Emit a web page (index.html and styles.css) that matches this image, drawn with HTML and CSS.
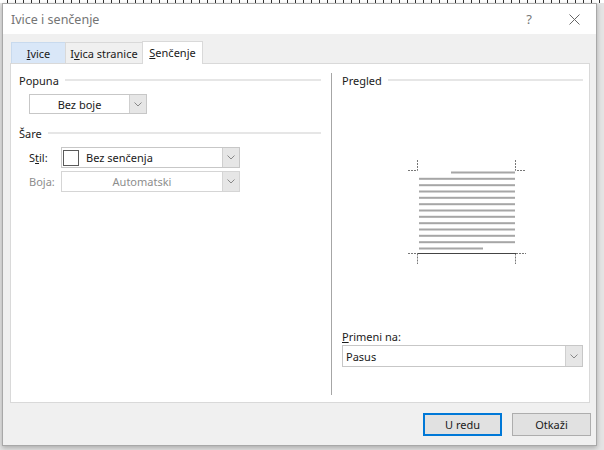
FILE: index.html
```html
<!DOCTYPE html>
<html lang="sr">
<head>
<meta charset="utf-8">
<title>Ivice i senčenje</title>
<link rel="stylesheet" href="styles.css">
</head>
<body>
<div class="ruler"></div>
<div class="dialog">
  <div class="titlebar">
    <span class="title">Ivice i senčenje</span>
    <span class="help">?</span>
    <span class="close">
      <svg width="11" height="11" viewBox="0 0 11 11"><path d="M0.5 0.5 L10.5 10.5 M10.5 0.5 L0.5 10.5" stroke="#666" stroke-width="1" fill="none"/></svg>
    </span>
  </div>
  <div class="body">
    <div class="tabs">
      <div class="tab tab-hover" style="width:55px"><u>I</u>vice</div>
      <div class="tab" style="width:78px">I<u>v</u>ica stranice</div>
      <div class="tab tab-active" style="width:61px"><u>S</u>enčenje</div>
    </div>
    <div class="panel">
      <div class="col-left">
        <div class="group-head"><span>Popuna</span><i class="rule"></i></div>
        <div class="combo combo-fill">
          <span class="combo-text center">Bez boje</span>
          <span class="arrow"><svg width="8" height="5" viewBox="0 0 8 5"><path d="M0.5 0.5 L4 4 L7.5 0.5" stroke="#888" fill="none"/></svg></span>
        </div>
        <div class="group-head head-sare"><span>Šare</span><i class="rule"></i></div>
        <div class="row">
          <span class="lbl">S<u>t</u>il:</span>
          <div class="combo combo-wide">
            <span class="swatch"></span>
            <span class="combo-text">Bez senčenja</span>
            <span class="arrow"><svg width="8" height="5" viewBox="0 0 8 5"><path d="M0.5 0.5 L4 4 L7.5 0.5" stroke="#888" fill="none"/></svg></span>
          </div>
        </div>
        <div class="row row-2">
          <span class="lbl disabled">Boja:</span>
          <div class="combo combo-wide combo-disabled">
            <span class="combo-text center disabled">Automatski</span>
            <span class="arrow"><svg width="8" height="5" viewBox="0 0 8 5"><path d="M0.5 0.5 L4 4 L7.5 0.5" stroke="#888" fill="none"/></svg></span>
          </div>
        </div>
      </div>
      <div class="divider"></div>
      <div class="col-right">
        <div class="group-head"><span>Pregled</span><i class="rule"></i></div>
        <svg class="preview" width="240" height="104" viewBox="0 0 240 104">
          <g stroke="#777" stroke-width="1" stroke-dasharray="2 1" fill="none">
            <path d="M75.5 0 V10.5 H66"/>
            <path d="M173.5 0 V10.5 H184"/>
            <path d="M66 93.5 H76 M75.5 93.5 V104"/>
            <path d="M174 93.5 H184 M173.5 93.5 V104"/>
          </g>
          <g fill="#a6a6a6">
            <rect x="109" y="11.5" width="64" height="2"/>
            <rect x="77" y="17.8" width="96" height="2"/>
            <rect x="77" y="24.2" width="96" height="2"/>
            <rect x="77" y="30.5" width="96" height="2"/>
            <rect x="77" y="36.8" width="96" height="2"/>
            <rect x="77" y="43.2" width="96" height="2"/>
            <rect x="77" y="49.5" width="96" height="2"/>
            <rect x="77" y="55.8" width="96" height="2"/>
            <rect x="77" y="62.2" width="96" height="2"/>
            <rect x="77" y="68.5" width="96" height="2"/>
            <rect x="77" y="74.8" width="96" height="2"/>
            <rect x="77" y="81.2" width="96" height="2"/>
            <rect x="77" y="87.5" width="64" height="2"/>
          </g>
          <path d="M76 93.5 H174" stroke="#444" stroke-width="1"/>
        </svg>
        <div class="spacer"></div>
        <div class="lbl-apply"><u>P</u>rimeni na:</div>
        <div class="combo combo-apply">
          <span class="combo-text">Pasus</span>
          <span class="arrow"><svg width="8" height="5" viewBox="0 0 8 5"><path d="M0.5 0.5 L4 4 L7.5 0.5" stroke="#888" fill="none"/></svg></span>
        </div>
      </div>
    </div>
    <div class="buttons">
      <button class="btn btn-default">U redu</button>
      <button class="btn">Otkaži</button>
    </div>
  </div>
</div>
</body>
</html>
```

FILE: styles.css
```css
* { box-sizing: border-box; }
html, body { margin: 0; padding: 0; }
body {
  width: 604px;
  height: 450px;
  overflow: hidden;
  background: #e4e4e4;
  font-family: "Segoe UI", "Noto Sans", "Open Sans", sans-serif;
  font-size: 11px;
  color: #1a1a1a;
}
.ruler {
  height: 3px;
  background-color: #fff;
  background-image: repeating-linear-gradient(to right, transparent 0, transparent 7px, #333 7px, #333 8px);
}
.dialog {
  margin-left: 2px;
  width: 595px;
  height: 443px;
  border: 1px solid #a8a8a8;
  background: #f0f0f0;
  box-shadow: 0 2px 5px rgba(0,0,0,0.25);
  display: flex;
  flex-direction: column;
}
.titlebar {
  height: 30px;
  background: #fff;
  display: flex;
  align-items: center;
  padding-left: 8px;
}
.title {
  flex: 1;
  font-size: 12.5px;
  color: #747474;
}
.help {
  width: 20px;
  text-align: center;
  font-size: 13px;
  color: #777;
  margin-right: 30px;
}
.close {
  width: 11px;
  display: flex;
  margin-right: 16px;
}
.body {
  flex: 1;
  padding: 7px 6px 0 7px;
  display: flex;
  flex-direction: column;
}
.tabs {
  display: flex;
  align-items: flex-end;
  height: 22px;
  padding-left: 1px;
  position: relative;
  z-index: 1;
}
.tab {
  height: 21px;
  border: 1px solid #d9d9d9;
  border-bottom: none;
  margin-right: -1px;
  display: flex;
  align-items: center;
  justify-content: center;
  background: #f0f0f0;
  color: #1a1a1a;
  white-space: nowrap;
}
.tab-hover {
  background: #d9e7f8;
  border-color: #c8daee;
}
.tab-active {
  height: 23px;
  background: #fff;
  margin-bottom: -1px;
  padding-bottom: 1px;
}
.panel {
  height: 340px;
  border: 1px solid #d9d9d9;
  background: #fff;
  display: flex;
}
.col-left {
  width: 320px;
  padding: 8px 10px 0 8px;
}
.group-head {
  height: 16px;
  display: flex;
  align-items: center;
  gap: 6px;
}
.rule {
  flex: 1;
  height: 2px;
  background: #e6e6e6;
}
.head-sare { margin-top: 11px; }
.combo {
  display: flex;
  align-items: stretch;
  border: 1px solid #c7c7c7;
  background: #fff;
}
.combo-text {
  flex: 1;
  display: flex;
  align-items: center;
  padding-left: 3px;
}
.center { justify-content: center; padding-left: 0; }
.arrow {
  width: 17px;
  background: #e6e6e6;
  border-left: 1px solid #cfcfcf;
  display: flex;
  align-items: center;
  justify-content: center;
}
.combo-fill {
  margin: 6px 0 0 10px;
  width: 118px;
  height: 20px;
}
.row {
  display: flex;
  align-items: center;
  margin-top: 6px;
  padding-left: 10px;
}
.row-2 { margin-top: 3px; }
.lbl { width: 32px; }
.disabled { color: #8d8d8d; }
.combo-wide {
  width: 179px;
  height: 21px;
}
.combo-wide .combo-text { padding-left: 7px; }
.combo-wide .combo-text.center { padding-left: 0; }
.combo-disabled { border-color: #d5d5d5; }
.combo-disabled .arrow { border-left-color: #d5d5d5; }
.swatch {
  width: 16px;
  height: 16px;
  margin: 2px 0 0 1px;
  border: 1px solid #5a5a5a;
  background: #fff;
}
.divider {
  width: 1px;
  background: #a6a6a6;
  margin: 9px 0 7px 0;
}
.col-right {
  flex: 1;
  display: flex;
  flex-direction: column;
  padding: 8px 6px 35px 10px;
}
.preview {
  display: block;
  margin-top: 72px;
}
.spacer { flex: 1; }
.lbl-apply {
  height: 16px;
  display: flex;
  align-items: center;
  margin-bottom: 1px;
}
.combo-apply {
  height: 22px;
}
.buttons {
  display: flex;
  justify-content: flex-end;
  gap: 10px;
  margin-top: 10px;
  margin-right: -1px;
}
.btn {
  width: 79px;
  height: 23px;
  border: 1px solid #adadad;
  background: #e1e1e1;
  font-family: inherit;
  font-size: inherit;
  color: #1a1a1a;
  padding: 0;
}
.btn-default {
  border-color: #0078d7;
  box-shadow: inset 0 0 0 1px #0078d7;
}
```
